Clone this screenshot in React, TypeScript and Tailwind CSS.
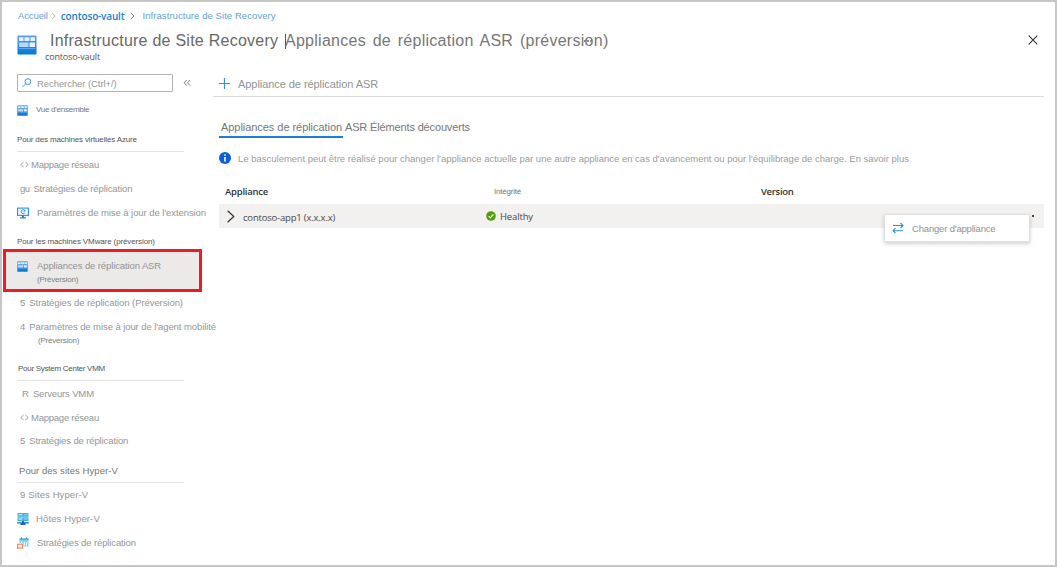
import type { ReactNode } from 'react';

function Grid({ className }: { className: string }) {
  return (
    <svg className={`shrink-0 ${className}`} viewBox="0 0 20 20">
      <defs>
        <linearGradient id="blue" x1="0" y1="0" x2="0" y2="1">
          <stop offset="0" stopColor="#5ea0ef" />
          <stop offset="1" stopColor="#0078d4" />
        </linearGradient>
      </defs>
      <rect x="0.5" y="0.5" width="19" height="19" rx="0.8" fill="url(#blue)" />
      <path d="M2 2.200h4.500v3.800H2zM7.500 2.200h5v3.800h-5zM13.500 2.200h4.500v3.800h-4.500zM12.500 7.500h5.500v4.500h-5.500z" fill="#e6f2ff" />
      <path d="M2 7.500h9.500v4.500H2z" fill="#b9d8fa" />
      <path d="M2 13h16v1H2z" fill="#5fa8ec" />
    </svg>
  );
}

function MonitorIcon() {
  return (
    <svg className="size-3 shrink-0" viewBox="0 0 12 12" fill="none">
      <rect x="0.600" y="1.100" width="10.800" height="7.300" fill="#f2f9ff" stroke="#2f8fdc" strokeWidth="1.100" />
      <path d="M7.800 3.600A2 2 0 1 0 8 5.600M8 2.600v1.500H6.500" stroke="#2f8fdc" strokeWidth="0.900" />
      <path d="M5 8.500h2v1.700h2v1.200H3v-1.200h2z" fill="#2489d8" />
    </svg>
  );
}

function HostIcon() {
  return (
    <svg className="size-3 shrink-0" viewBox="0 0 12 12">
      <rect x="0.500" y="0" width="11" height="3.800" fill="#3fb3de" />
      <rect x="0.500" y="4.300" width="11" height="3.700" fill="#3fb3de" />
      <path d="M1.500 1.300h4v1h-4zM7.500 1.300h1v1h-1zM9.500 1.300h1v1h-1zM1.500 5.600h4v1h-4zM7.500 5.600h1v1h-1zM9.500 5.600h1v1h-1z" fill="#e8f8ff" />
      <path d="M5 8h2v1.200h4.800v1.300H8.500V12h-5v-1.500H.2V9.200H5z" fill="#0f6cc4" />
    </svg>
  );
}

function PolicyIcon() {
  return (
    <svg className="size-3 shrink-0" viewBox="0 0 12 12" fill="none">
      <path d="M2.500 1.500h9v8h-5V6.500h-4z" fill="#8fd3f0" />
      <path d="M2.500 1.500h9v1.700h-9z" fill="#49b4e2" />
      <path d="M4.500.3v2M9.500.3v2" stroke="#2f9fd6" />
      <path d="M7.500 5v3.500M9.500 5v3.500M4.500 4.500v2" stroke="#eefaff" strokeWidth="0.900" />
      <path d="M.6 7.200h5v3.900h-5z" fill="#fff2eb" stroke="#ef8a5b" strokeWidth="1.100" />
    </svg>
  );
}

function MappingIcon() {
  return (
    <svg className="mr-[2px] h-[7px] w-[9px]" viewBox="0 0 9 7" fill="none" stroke="#8f9496" strokeWidth="0.900">
      <path d="M3.500 1L.8 3.500 3.500 6M5.500 1l2.700 2.500L5.500 6" />
    </svg>
  );
}

function Item({ className, children }: { className: string; children: ReactNode }) {
  return <div className={`flex shrink-0 items-center text-[9.500px] text-[#929698] ${className}`}>{children}</div>;
}

function Heading({ className, children }: { className: string; children: ReactNode }) {
  return <div className={`flex w-[167px] shrink-0 items-center border-b border-[#e3e3e3] ${className}`}>{children}</div>;
}

function Sidebar() {
  return (
    <nav className="flex w-[211px] shrink-0 flex-col pl-[15px]">
      <div className="mt-2 flex h-[18px] shrink-0 items-center">
        <div className="flex h-[18px] w-[156px] items-center rounded-[1px] border border-[#b4b4b4] pl-1">
          <svg className="size-[10px]" viewBox="0 0 11 11" fill="none" stroke="#3a96dd" strokeWidth="1.100">
            <circle cx="6.500" cy="4" r="3.200" />
            <path d="M4.200 6.300L.8 9.800" />
          </svg>
          <span className="ml-[5px] pt-px text-[9.500px] tracking-[-0.07px] text-[#969696]">Rechercher (Ctrl+/)</span>
        </div>
        <svg className="ml-[10px] h-2 w-2" viewBox="0 0 8 8" fill="none" stroke="#6c6c6c" strokeWidth="0.900">
          <path d="M3.700 1L1.200 3.800l2.500 2.800M7 1L4.500 3.800 7 6.600" />
        </svg>
      </div>
      <div className="flex h-9 shrink-0 items-center">
        <Grid className="size-[11px]" />
        <span className="ml-2 text-[8px] tracking-[-0.26px] text-[#777]">Vue d'ensemble</span>
      </div>
      <Heading className="h-6 text-[8px] tracking-[-0.15px] text-[#555]">Pour des machines virtuelles Azure</Heading>
      <Item className="h-[25px] pl-[3px]">
        <MappingIcon />
        <span className="pt-px tracking-[-0.24px]">Mappage réseau</span>
      </Item>
      <Item className="h-[23px] gap-1 pl-[3px]"><span className="tracking-[-0.6px]">gu</span><span className="tracking-[-0.12px]">Stratégies de réplication</span></Item>
      <Item className="h-[25px] whitespace-nowrap"><MonitorIcon /><span className="ml-2 tracking-[-0.07px]">Paramètres de mise à jour de l'extension</span></Item>
      <div className="flex h-6 shrink-0 items-start pt-[13px] text-[8px] tracking-[-0.12px] text-[#555]">Pour les machines VMware (préversion)</div>
      <div className="-ml-[14px] flex h-[43px] w-[199px] shrink-0 flex-col border-3 border-[#ed1c24] bg-[#ebeae9] pl-[11px]">
        <div className="mt-2 flex h-3 items-center text-[9.500px] text-[#929292]">
          <Grid className="size-[11px]" />
          <span className="ml-[9px] tracking-[-0.11px]">Appliances de réplication ASR</span>
        </div>
        <span className="mt-0.5 pl-[20px] text-[8px] leading-[11px] tracking-[-0.2px] text-[#808080]">(Préversion)</span>
      </div>
      <Item className="h-[21px] gap-1 pl-[3px]"><span>5</span><span className="tracking-[-0.07px]">Stratégies de réplication (Préversion)</span></Item>
      <Item className="h-[27px] gap-1 pl-[3px] whitespace-nowrap"><span>4</span><span className="tracking-[-0.08px]">Paramètres de mise à jour de l'agent mobilité</span></Item>
      <span className="-mt-[3px] h-3 shrink-0 pl-[21px] text-[8px] tracking-[-0.2px] text-[#808080]">(Préversion)</span>
      <Heading className="mt-1 h-7 pl-px text-[8px] tracking-[-0.27px] text-[#555]"><span className="pt-1">Pour System Center VMM</span></Heading>
      <Item className="h-[25px] gap-1 pl-[5px]"><span>R</span><span className="tracking-[-0.15px]">Serveurs VMM</span></Item>
      <Item className="h-[23px] pl-[3px]">
        <MappingIcon />
        <span className="tracking-[-0.24px]">Mappage réseau</span>
      </Item>
      <Item className="h-6 gap-1 pl-[3px]"><span>5</span><span className="tracking-[-0.12px]">Stratégies de réplication</span></Item>
      <Heading className="mt-1.5 h-6 pl-[2px] text-[9.500px] tracking-[0.05px] text-[#777]">Pour des sites Hyper-V</Heading>
      <Item className="h-6 gap-[3px] pl-[3px]"><span>9</span><span className="tracking-[0.1px]">Sites Hyper-V</span></Item>
      <Item className="h-6"><HostIcon /><span className="ml-[7px] tracking-[0.12px]">Hôtes Hyper-V</span></Item>
      <Item className="h-6"><PolicyIcon /><span className="ml-2 tracking-[-0.12px]">Stratégies de réplication</span></Item>
    </nav>
  );
}

export default function App() {
  return (
    <div className="relative flex h-[567px] w-[1057px] flex-col overflow-hidden border-2 border-[#c6c6c6] bg-white font-['Liberation_Sans',sans-serif] leading-none">
      <div className="flex h-7 shrink-0 items-center pl-4 text-[9.500px] text-[#5f9fdd]">
        <span className="tracking-[-0.12px]">Accueil</span>
        <svg className="ml-1 h-2 w-1" viewBox="0 0 4 8" fill="none" stroke="#999" strokeWidth="0.800"><path d="M.5 1.500L3.200 4 .5 6.500" /></svg>
        <span className="ml-[5px] font-['Open_Sans',sans-serif] text-[10px] font-semibold tracking-[-0.17px] text-[#1b7fd6]">contoso-vault</span>
        <svg className="ml-[5px] h-2 w-[5px]" viewBox="0 0 5 8" fill="none" stroke="#777" strokeWidth="0.900"><path d="M.7.7L4 4 .7 7.300" /></svg>
        <span className="ml-2 tracking-[0.07px]">Infrastructure de Site Recovery</span>
      </div>
      <header className="flex h-9 shrink-0 pl-4">
        <Grid className="mt-[5px] -ml-px size-5" />
        <div className="ml-2 flex flex-col">
          <h1 className="mt-px flex h-5 items-center text-[16px] whitespace-nowrap text-[#686868]">
            <span className="ml-[5px] w-[235px] tracking-[0.25px]">Infrastructure de Site Recovery</span>
            <span className="h-[15px] w-px bg-[#555]" />
            <span className="relative -mt-px -ml-px text-[#777]">
              <span className="tracking-[0.27px] [word-spacing:2px]">Appliances de réplication ASR (préversion)</span>
              <span className="absolute top-[7px] left-[299px] flex gap-px"><i className="size-[2px] bg-[#888]" /><i className="size-[2px] bg-[#888]" /><i className="size-[2px] bg-[#888]" /></span>
            </span>
          </h1>
          <p className="mt-px font-['Open_Sans',sans-serif] text-[9px] tracking-[-0.15px] text-[#555]">contoso-vault</p>
        </div>
        <svg className="mt-[5px] mr-[17px] ml-auto size-[10px]" viewBox="0 0 10 10" stroke="#333" strokeWidth="1.100"><path d="M.7.7l8.600 8.600M9.300.7L.7 9.300" /></svg>
      </header>
      <div className="flex min-h-0 flex-1">
        <Sidebar />
        <main className="flex w-[831px] shrink-0 flex-col">
          <div className="flex h-[31px] items-center border-b border-[#dcdcdc] pt-1 pl-[6px]">
            <svg className="size-[11px]" viewBox="0 0 11 11" stroke="#3a96dd" strokeWidth="1.200"><path d="M5.500 0v11M0 5.500h11" /></svg>
            <span className="ml-2 pt-[2px] text-[11px] tracking-[-0.06px] text-[#929292]">Appliance de réplication ASR</span>
          </div>
          <div className="mt-[19px] ml-[6px] flex h-[22px] text-[11px] text-[#777]">
            <div className="flex w-[124px] items-center border-b-2 border-[#1b7fd6] pt-[2px] pl-[2px] tracking-[-0.05px] whitespace-nowrap">Appliances de réplication</div>
            <span className="ml-[2px] flex h-5 items-center pt-[2px] tracking-[-0.15px]">ASR Éléments découverts</span>
          </div>
          <div className="mt-[10px] ml-[6px] flex h-[20px] items-center">
            <svg className="size-3" viewBox="0 0 12 12"><circle cx="6" cy="6" r="6" fill="#0c5dde" /><path d="M5.200 2.300h1.600v1.500H5.200zM5.200 4.900h1.600v4.700H5.200z" fill="#fff" /></svg>
            <span className="ml-[7px] pt-px text-[9.500px] tracking-[-0.003px] whitespace-nowrap text-[#9c9c9c]">Le basculement peut être réalisé pour changer l'appliance actuelle par une autre appliance en cas d'avancement ou pour l'équilibrage de charge. En savoir plus</span>
          </div>
          <div className="mt-[12px] ml-[6px] grid h-[24px] grid-cols-[275px_267px_1fr] items-center font-['Open_Sans',sans-serif] text-[9.500px] font-semibold text-[#333]">
            <span className="pl-[6px] tracking-[-0.23px]">Appliance</span>
            <span className="font-['Liberation_Sans',sans-serif] text-[8px] font-normal tracking-[-0.2px] text-[#777]">Intégrité</span>
            <span className="tracking-[-0.3px]">Version</span>
          </div>
          <div className="ml-[6px] grid h-[24px] grid-cols-[267px_1fr_12px] items-center bg-[#f2f1f0] font-['Open_Sans',sans-serif] text-[9.500px] text-[#484848]">
            <div className="flex items-center pl-[8px]">
              <svg className="h-[13px] w-2" viewBox="0 0 8 13" fill="none" stroke="#333" strokeWidth="1.200"><path d="M.6.8l6.200 5.700L.6 12.200" /></svg>
              <span className="ml-2 pt-[3px] tracking-[-0.19px]">contoso-app1 (x.x.x.x)</span>
            </div>
            <div className="flex items-center">
              <svg className="size-[10px]" viewBox="0 0 10 10" fill="none"><circle cx="5" cy="5" r="4.800" fill="#4fa00b" /><path d="M2.700 5.100l1.700 1.700 3-3.400" stroke="#fff" strokeWidth="1.200" /></svg>
              <span className="ml-1 pt-px tracking-[-0.15px]">Healthy</span>
            </div>
            <i className="size-[2px] bg-[#444]" />
          </div>
        </main>
      </div>
      <div className="absolute top-[212px] left-[882px] flex h-[28px] w-[146px] items-center rounded-[1px] border border-[#e0e0e0] bg-white pl-[7px] shadow-[0_2px_4px_rgba(0,0,0,0.18)]">
        <svg className="h-3 w-3" viewBox="0 0 12 12" fill="none" stroke="#2f8fdc" strokeWidth="1.100"><path d="M1 3.500h10M8.500 1L11 3.500 8.500 6M11 8.700H1M3.500 6.200L1 8.700l2.500 2.500" /></svg>
        <span className="ml-2 pt-[2px] text-[9.500px] tracking-[-0.18px] text-[#929292]">Changer d'appliance</span>
      </div>
    </div>
  );
}
